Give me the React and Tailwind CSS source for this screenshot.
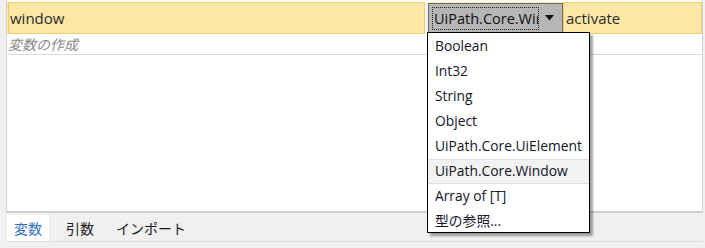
import React from "react";

const items = [
  "Boolean",
  "Int32",
  "String",
  "Object",
  "UiPath.Core.UiElement",
  "UiPath.Core.Window",
  "Array of [T]",
  "型の参照...",
];

export default function App() {
  const font = { fontFamily: '"Open Sans", "Noto Sans CJK JP", sans-serif' };
  return (
    <div
      className="relative w-[705px] h-[248px] bg-[#f0f0f0] overflow-hidden text-[14px]"
      style={font}
    >
      <div className="ml-[6px] mr-[2px] h-[213px] bg-white border-l border-r border-[#d4d4d4] border-b-2 border-b-[#cdd0d4] flex flex-col">
        <div className="mt-[2px] h-[32px] flex bg-[#fde7a6]">
          <div className="w-[417px] ml-[1px] border border-[#f0cc6c] flex items-center pl-[1px] text-[#2b2b2b] text-[15px]">
            window
          </div>
          <div className="w-[3px] bg-[#f3f3f3]" />
          <div className="w-[135px] my-[1px] border border-[#6b6b6b] bg-[#b6b6b6] flex items-center px-[3px]">
            <div className="relative w-[107px] h-[23px] border border-dotted border-[#202020] overflow-hidden">
              <span className="absolute left-[1px] top-[1px] whitespace-nowrap text-[14.5px] leading-[20px] text-[#101010]">
                UiPath.Core.Win
              </span>
            </div>
            <div className="flex-1 flex justify-center">
              <svg width="9" height="6" viewBox="0 0 9 6">
                <path d="M0 0 L9 0 L4.5 5.5 Z" fill="#111" />
              </svg>
            </div>
          </div>
          <div className="flex-1 border border-[#f0cc6c] flex items-center pl-[2px] text-[#2b2b2b] text-[15px]">
            activate
          </div>
        </div>
        <div className="h-[21px] border-b border-[#d8dbe0] flex items-center pl-[1px] italic text-[#8a8a8a] text-[14px]">
          変数の作成
        </div>
        <div className="flex-1" />
      </div>
      <div className="h-[28px] flex items-end ml-[7px]">
        <div className="w-[42px] h-[26px] bg-white flex items-center justify-center text-[#2f6fc0]">
          変数
        </div>
        <div className="ml-[17px] h-[26px] flex items-center text-[#1a1a1a]">引数</div>
        <div className="ml-[22px] h-[26px] flex items-center text-[#1a1a1a]">インポート</div>
      </div>
      <div className="ml-[6px] mr-[2px] h-[1px] bg-[#dcdcdc]" />

      <div className="absolute left-[427px] top-[32px] w-[163px] h-[201px] bg-white border border-black shadow-[3px_3px_2px_rgba(0,0,0,0.35)] pt-[1px]">
        {items.map((t, i) => (
          <div
            key={t}
            className={
              "h-[25px] flex items-center pl-[7px] text-[13.8px] text-[#14142a] whitespace-nowrap " +
              (i === 5 ? "bg-[#f2f2f2] border-y border-[#dedede]" : "")
            }
          >
            {t}
          </div>
        ))}
      </div>
    </div>
  );
}
